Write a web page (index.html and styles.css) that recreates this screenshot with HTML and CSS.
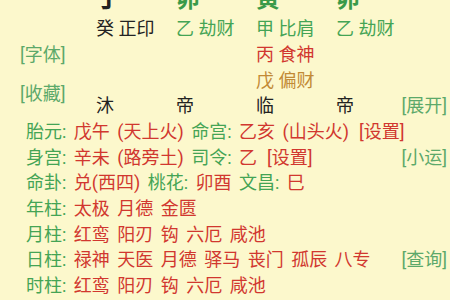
FILE: index.html
```html
<!DOCTYPE html>
<html lang="zh">
<head>
<meta charset="utf-8">
<title>排盘</title>
<link rel="stylesheet" href="styles.css">
</head>
<body>
<div class="page">
  <div class="top">
    <div class="side-left">
      <span class="btn">[字体]</span>
      <span class="btn">[收藏]</span>
    </div>
    <div class="pillars">
      <div class="big k">丁</div><div class="big g">卯</div><div class="big g">寅</div><div class="big g">卯</div>
      <div class="k">癸 正印</div><div class="g">乙 劫财</div><div class="g">甲 比肩</div><div class="g">乙 劫财</div>
      <div></div><div></div><div class="r">丙 食神</div><div></div>
      <div></div><div></div><div class="o">戊 偏财</div><div></div>
      <div class="k">沐</div><div class="k">帝</div><div class="k">临</div><div class="k">帝</div>
    </div>
    <div class="side-right"><span class="btn">[展开]</span></div>
  </div>
  <div class="info">
    <div class="line"><span><span class="g">胎元:</span> <span class="r">戊午 (天上火)</span> <span class="g">命宫:</span> <span class="r">乙亥 (山头火)</span><span class="r set">[设置]</span></span></div>
    <div class="line"><span><span class="g">身宫:</span> <span class="r">辛未 (路旁土)</span> <span class="g">司令:</span> <span class="r">乙</span><span class="r set">[设置]</span></span><span class="btn">[小运]</span></div>
    <div class="line"><span><span class="g">命卦:</span> <span class="r">兑(西四)</span> <span class="g">桃花:</span> <span class="r">卯酉</span> <span class="g">文昌:</span> <span class="r">巳</span></span></div>
    <div class="line"><span><span class="g">年柱:</span> <span class="r">太极 月德 金匮</span></span></div>
    <div class="line"><span><span class="g">月柱:</span> <span class="r">红鸾 阳刃 钩 六厄 咸池</span></span></div>
    <div class="line"><span><span class="g">日柱:</span> <span class="r">禄神 天医 月德 驿马 丧门 孤辰 八专</span></span><span class="btn">[查询]</span></div>
    <div class="line"><span><span class="g">时柱:</span> <span class="r">红鸾 阳刃 钩 六厄 咸池</span></span></div>
  </div>
</div>
</body>
</html>
```

FILE: styles.css
```css
html, body {
  margin: 0;
  padding: 0;
}
body {
  width: 450px;
  height: 300px;
  overflow: hidden;
  background: #fcf8cc;
  font-family: Roboto, "Noto Sans CJK SC", sans-serif;
  font-size: 18px;
  color: #222;
}
.page {
  width: 450px;
}
.top {
  display: flex;
  margin-top: -17px;
}
.side-left {
  width: 96px;
  box-sizing: border-box;
  padding-left: 20px;
  padding-top: 59px;
  display: flex;
  flex-direction: column;
  gap: 13px;
  line-height: 25.7px;
}
.pillars {
  display: grid;
  grid-template-columns: 80px 80px 80px 64px;
  grid-template-rows: 33.3px repeat(4, 25.7px);
  line-height: 25.7px;
  white-space: nowrap;
}
.pillars .big {
  font-size: 24px;
  font-weight: 700;
  line-height: 33.3px;
}
.side-right {
  flex: 1;
  align-self: flex-end;
  text-align: right;
  padding-right: 3px;
  line-height: 25.7px;
  white-space: nowrap;
}
.info {
  display: flex;
  flex-direction: column;
}
.line {
  display: flex;
  justify-content: space-between;
  height: 25.7px;
  line-height: 25.7px;
  padding: 0 3px 0 26px;
  white-space: nowrap;
  word-spacing: 3px;
}
.btn {
  color: #5ca96a;
  word-spacing: 0;
}
.set {
  margin-left: 10px;
}
.k { color: #222; }
.g { color: #44a455; }
.big.g { color: #3a9a4a; }
.r { color: #d1372f; }
.o { color: #c28a36; }
```
